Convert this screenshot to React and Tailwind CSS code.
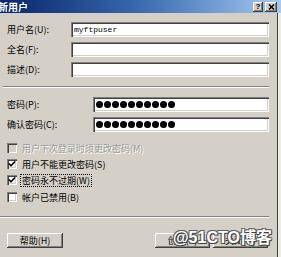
import React from "react";

const sunken =
  "shadow-[inset_1px_1px_0_#808080,inset_2px_2px_0_#404040,inset_-1px_-1px_0_#ffffff,inset_-2px_-2px_0_#d4d0c8]";
const raised =
  "shadow-[inset_-1px_-1px_0_#404040,inset_1px_1px_0_#ffffff,inset_-2px_-2px_0_#808080,inset_2px_2px_0_#d4d0c8]";

function Field({ label, labelW, inputW, children }) {
  return (
    <div className="flex items-center h-[15px]">
      <div className={`${labelW} text-[9px] leading-none text-black`}>{label}</div>
      <div className={`${inputW} h-[15px] bg-white ${sunken} flex items-center pl-[3px]`}>{children}</div>
    </div>
  );
}

function Dots() {
  return (
    <div className="flex gap-[1px]">
      {[0, 1, 2, 3, 4, 5, 6, 7, 8, 9].map((i) => (
        <div key={i} className="w-[7px] h-[7px] rounded-full bg-black" />
      ))}
    </div>
  );
}

function Check({ checked, disabled, label, focus, className = "" }) {
  return (
    <div className={`flex items-center h-[16px] ${className}`}>
      <div
        className={`w-[10px] h-[10px] ${disabled ? "bg-[#d4d0c8]" : "bg-white"} ${sunken} flex items-center justify-center`}
      >
        {checked && (
          <svg width="8" height="8" viewBox="0 0 8 8">
            <path d="M1 3.5 L3 5.8 L7 1.5" fill="none" stroke="#000" strokeWidth="1.6" />
          </svg>
        )}
      </div>
      <div
        className={`ml-[3px] text-[9px] leading-none ${
          disabled ? "text-[#9a9a9a] [text-shadow:1px_1px_0_#ffffff]" : "text-black"
        } ${focus ? "border border-dotted border-black px-[1px] py-[1px]" : "px-[2px]"}`}
      >
        {label}
      </div>
    </div>
  );
}

export default function App() {
  return (
    <div className="w-[281px] h-[257px] relative overflow-hidden bg-[#ecebe8] font-['Noto_Sans_CJK_SC','Noto_Sans',sans-serif]">
      <div className="h-[13px] flex items-start bg-linear-to-r from-[#0a246a] via-[#3a6ab0] to-[#a6caf0]">
        <div className="ml-[-2px] mt-[1px] text-[10px] leading-[11px] font-bold text-white">新用户</div>
        <div className="ml-auto mt-[2px] mr-[4px] flex gap-[2px]">
          <div className={`w-[10px] h-[10px] bg-[#d4d0c8] ${raised} flex items-center justify-center text-[8px] font-bold leading-none text-black font-['Liberation_Sans',sans-serif]`}>
            ?
          </div>
          <div className={`w-[12px] h-[10px] bg-[#d4d0c8] ${raised} flex items-center justify-center`}>
            <svg width="7" height="6" viewBox="0 0 7 6">
              <path d="M1 0.5 L6 5.5 M6 0.5 L1 5.5" stroke="#000" strokeWidth="1.5" />
            </svg>
          </div>
        </div>
      </div>
      <div className="w-[278px] h-[244px] bg-[#d4d0c8] border-r border-[#404040] pl-[7px] pt-[9px] flex flex-col">
        <div className="flex flex-col gap-[5px]">
          <Field label="用户名(U):" labelW="w-[64px]" inputW="w-[198px]">
            <span className="text-[8px] leading-none text-black font-['Liberation_Mono',monospace]">myftpuser</span>
          </Field>
          <Field label="全名(F):" labelW="w-[64px]" inputW="w-[198px]" />
          <Field label="描述(D):" labelW="w-[64px]" inputW="w-[198px]" />
        </div>
        <div className="mt-[9px] ml-[-4px] w-[266px] h-[2px] border-t border-[#808080] border-b border-b-white" />
        <div className="mt-[9px] flex flex-col gap-[5px]">
          <Field label="密码(P):" labelW="w-[86px]" inputW="w-[176px]">
            <Dots />
          </Field>
          <Field label="确认密码(C):" labelW="w-[86px]" inputW="w-[176px]">
            <Dots />
          </Field>
        </div>
        <div className="mt-[8px] flex flex-col">
          <Check disabled label="用户下次登录时须更改密码(M)" />
          <Check checked label="用户不能更改密码(S)" />
          <Check checked focus label="密码永不过期(W)" />
          <Check label="帐户已禁用(B)" className="mt-[1px]" />
        </div>
        <div className="mt-[11px] ml-[-7px] w-[269px] h-[2px] border-t border-[#808080] border-b border-b-white" />
        <div className="mt-[15px] w-[261px] flex justify-between">
          <div className={`w-[56px] h-[15px] bg-[#d4d0c8] ${raised} flex items-center justify-center text-[9px] leading-none text-black`}>
            帮助(H)
          </div>
          <div className="flex gap-[3px]">
            <div className={`w-[55px] h-[15px] bg-[#d4d0c8] ${raised} flex items-center justify-center text-[9px] leading-none text-black`}>
              创建(E)
            </div>
            <div className={`w-[55px] h-[15px] bg-[#d4d0c8] ${raised} flex items-center justify-center text-[9px] leading-none text-black`}>
              关闭(O)
            </div>
          </div>
        </div>
      </div>
      <div className="absolute left-[173px] top-[228px] text-[16px] leading-[19px] font-bold text-white [text-shadow:1px_1px_0_#404040,-1px_-1px_0_#606060,1px_-1px_0_#606060,-1px_1px_0_#606060] font-['Liberation_Sans','Noto_Sans_CJK_SC',sans-serif]">
        @51CTO博客
      </div>
    </div>
  );
}
